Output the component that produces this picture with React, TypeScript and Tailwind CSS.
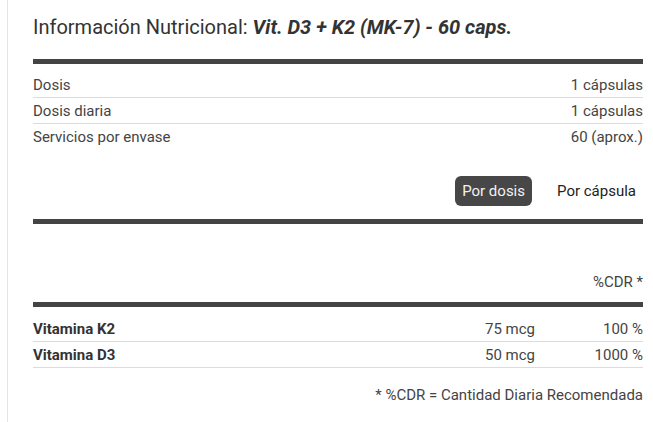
import React from 'react';

const infoRows = [
  { label: 'Dosis', value: '1 cápsulas' },
  { label: 'Dosis diaria', value: '1 cápsulas' },
  { label: 'Servicios por envase', value: '60 (aprox.)' },
];

const nutrients = [
  { name: 'Vitamina K2', amount: '75 mcg', cdr: '100 %' },
  { name: 'Vitamina D3', amount: '50 mcg', cdr: '1000 %' },
];

const App = () => {
  const [tab, setTab] = React.useState<'dosis' | 'capsula'>('dosis');

  return (
    <div className="ml-[7px] min-h-screen border-l border-[#e4e4e4] bg-white pl-[25px] pr-[10px] pt-[13px] font-['Roboto',sans-serif] text-[#444]">
      <h2 className="text-[20px] leading-[28px] text-[#333]">
        Información Nutricional: <span className="font-bold italic">Vit. D3 + K2 (MK-7) - 60 caps.</span>
      </h2>

      {/* Basic info */}
      <div className="mt-[18px] h-[5px] bg-[#444]"></div>
      <div className="mt-[8px] flex flex-col">
        {infoRows.map((row, i) => (
          <div
            key={row.label}
            className={`flex justify-between pt-[3px] pb-[2px] text-[15px] leading-[20px] ${i < infoRows.length - 1 ? 'border-b border-[#dcdcdc]' : ''}`}
          >
            <span>{row.label}</span>
            <span>{row.value}</span>
          </div>
        ))}
      </div>

      {/* Tabs */}
      <div className="mt-[27px] flex justify-end gap-[18px]">
        <button
          onClick={() => setTab('dosis')}
          className={`h-[30px] rounded-[6px] px-[7px] text-[15px] leading-[20px] ${tab === 'dosis' ? 'bg-[#474747] text-[#f2f2f2]' : 'text-[#222]'}`}
        >
          Por dosis
        </button>
        <button
          onClick={() => setTab('capsula')}
          className={`h-[30px] rounded-[6px] px-[7px] text-[15px] leading-[20px] ${tab === 'capsula' ? 'bg-[#474747] text-[#f2f2f2]' : 'text-[#222]'}`}
        >
          Por cápsula
        </button>
      </div>
      <div className="mt-[13px] h-[5px] bg-[#444]"></div>

      {/* Nutrients */}
      <div className="mt-[48px] text-right text-[15px] leading-[20px]">%CDR *</div>
      <div className="mt-[10px] h-[5px] bg-[#444]"></div>
      <div className="mt-[9px] flex flex-col">
        {nutrients.map(n => (
          <div
            key={n.name}
            className="grid grid-cols-[1fr_auto_108px] border-b border-[#dcdcdc] pt-[3px] pb-[2px] text-[15px] leading-[20px]"
          >
            <span className="font-bold text-[#333]">{n.name}</span>
            <span className="text-right">{n.amount}</span>
            <span className="text-right">{n.cdr}</span>
          </div>
        ))}
      </div>

      <p className="mt-[17px] text-right text-[15px] leading-[20px]">* %CDR = Cantidad Diaria Recomendada</p>
    </div>
  );
};

export default App;
